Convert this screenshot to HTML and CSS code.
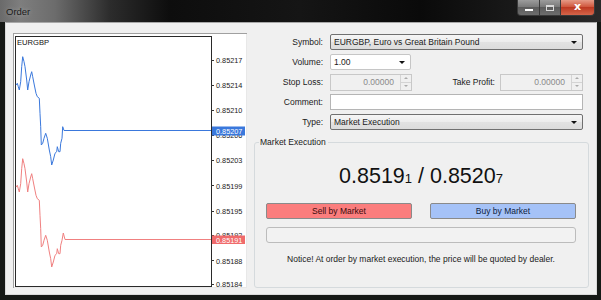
FILE: index.html
```html
<!DOCTYPE html>
<html lang="en">
  <head>
    <meta charset="UTF-8" />
    <title>Order</title>
    <link rel="stylesheet" href="styles.css">
  </head>
  <body>
    <div class="window">
      <div class="titlebar">
        <span class="title">Order</span>
        <div class="caption-buttons">
          <span class="cap-btn cap-min"><i></i></span>
          <span class="cap-btn cap-max"><i></i></span>
          <span class="cap-btn cap-close">x</span>
        </div>
      </div>

      <div class="client">
        <div class="chart-panel">
          <svg class="chart" width="234" height="255" viewBox="0 0 234 255">
            <rect class="plot" x="2.5" y="3.5" width="196" height="250" />
            <text class="sym" x="4" y="12">EURGBP</text>

            <g class="ticks">
              <line x1="198" y1="27.5" x2="201" y2="27.5" />
              <line x1="198" y1="52.5" x2="201" y2="52.5" />
              <line x1="198" y1="77.5" x2="201" y2="77.5" />
              <line x1="198" y1="102.5" x2="201" y2="102.5" />
              <line x1="198" y1="127.5" x2="201" y2="127.5" />
              <line x1="198" y1="152.5" x2="201" y2="152.5" />
              <line x1="198" y1="178.5" x2="201" y2="178.5" />
              <line x1="198" y1="202.5" x2="201" y2="202.5" />
              <line x1="198" y1="227.5" x2="201" y2="227.5" />
              <line x1="198" y1="251.5" x2="201" y2="251.5" />
            </g>
            <g class="axis">
              <text x="203" y="30">0.85217</text>
              <text x="203" y="55">0.85214</text>
              <text x="203" y="80">0.85210</text>
              <text x="203" y="105.2">0.85206</text>
              <text x="203" y="130">0.85203</text>
              <text x="203" y="155.5">0.85199</text>
              <text x="203" y="181">0.85195</text>
              <text x="203" y="205">0.85192</text>
              <text x="203" y="230.5">0.85188</text>
              <text x="203" y="254">0.85184</text>
            </g>

            <path class="ask" d="M3 52 L4.3 50.3 L5.3 53.7 L6.3 57 L7.7 48.7 L8.7 33.7 L9.7 23.7 L11 28.7 L12 33.7 L13.7 47 L14.7 57 L16 48.7 L17.7 42 L18.7 38.7 L19.7 43.7 L21.3 52 L23 60.3 L24.3 63.7 L26.3 65.3 L27 80.3 L27.7 93.7 L28.3 112 L29.7 110.3 L31 105.3 L32.7 100.3 L34.3 105.3 L36.3 117 L37.7 123.7 L38.7 132 L40.3 127 L42 120.3 L43.7 118.7 L44.3 113.7 L45.7 118.7 L47 118.7 L47.7 110.3 L49 105.3 L49.7 93.7 L51 97.5 L198 97.5" />
            <path class="bid" d="M3 154 L4.3 152.3 L5.3 155.7 L6.3 159 L7.7 150.7 L8.7 135.7 L9.7 125.7 L11 130.7 L12 135.7 L13.7 149 L14.7 159 L16 150.7 L17.7 144 L18.7 140.7 L19.7 145.7 L21.3 154 L23 162.3 L24.3 165.7 L26.3 167.3 L27 182.3 L27.7 195.7 L28.3 214 L29.7 212.3 L31 207.3 L32.7 202.3 L34.3 207.3 L36.3 219 L37.7 225.7 L38.7 234 L40.3 229 L42 222.3 L43.7 220.7 L44.3 215.7 L45.7 220.7 L47 220.7 L47.7 212.3 L49 207.3 L50.3 200 L52 206.5 L198 206.5" />

            <rect class="ask-tag" x="199" y="93.5" width="33" height="9" />
            <text class="tag-text" x="203" y="101">0.85207</text>
            <rect class="bid-tag" x="199" y="202.5" width="33" height="8.5" />
            <text class="tag-text" x="203" y="209.7">0.85191</text>
          </svg>
        </div>

        <div class="order-form">
          <div class="row">
            <span class="lbl">Symbol:</span>
            <div class="combo wide">EURGBP, Euro vs Great Britain Pound<b class="arrow"></b></div>
          </div>
          <div class="row">
            <span class="lbl">Volume:</span>
            <div class="edit-combo">1.00<b class="arrow"></b></div>
          </div>
          <div class="row">
            <span class="lbl">Stop Loss:</span>
            <div class="spin">
              <span class="spin-value">0.00000</span>
              <span class="spin-btns"><i class="up"></i><i class="down"></i></span>
            </div>
            <span class="lbl lbl-tp">Take Profit:</span>
            <div class="spin spin-tp">
              <span class="spin-value">0.00000</span>
              <span class="spin-btns"><i class="up"></i><i class="down"></i></span>
            </div>
          </div>
          <div class="row">
            <span class="lbl">Comment:</span>
            <div class="edit wide"></div>
          </div>
          <div class="row">
            <span class="lbl">Type:</span>
            <div class="combo wide">Market Execution<b class="arrow"></b></div>
          </div>

          <fieldset class="group">
            <legend>Market Execution</legend>
            <div class="price">0.8519<small>1</small> / 0.8520<small>7</small></div>
            <div class="trade-buttons">
              <div class="btn btn-sell">Sell by Market</div>
              <div class="btn btn-buy">Buy by Market</div>
            </div>
            <div class="progress"></div>
            <p class="notice">Notice! At order by market execution, the price will be quoted by dealer.</p>
          </fieldset>
        </div>
      </div>
    </div>
  </body>
</html>
```

FILE: styles.css
```css
* {
  margin: 0;
  padding: 0;
  box-sizing: border-box;
}

body {
  font-family: "Liberation Sans", Arial, sans-serif;
  background: #141814;
  width: 601px;
  height: 300px;
  overflow: hidden;
}

.window {
  width: 601px;
  height: 300px;
  background: #161916;
}

/* title bar */
.titlebar {
  height: 22px;
  display: flex;
  align-items: flex-start;
  background: linear-gradient(to right, #6a6a6a 0, #7e7e7e 20px, #6c6c6c 55px, #2c2c2c 110px, #0d0d0d 170px, #151515 300px, #0a0a0a 420px, #1a1a1a 520px, #2a2a2a 601px);
}

.title {
  font-size: 9.5px;
  color: #1a1a1a;
  margin: 6px 0 0 6px;
  text-shadow: 0 0 4px rgba(255, 255, 255, 0.35);
}

.caption-buttons {
  margin-left: auto;
  margin-right: 6px;
  display: flex;
  height: 16px;
}

.cap-btn {
  display: flex;
  align-items: center;
  justify-content: center;
  border: 1px solid #3a3a3a;
  border-top: none;
  color: #fff;
}

.cap-min {
  width: 23px;
  border-radius: 0 0 0 4px;
  background: linear-gradient(#9c9c9c, #7a7a7a 45%, #5c5c5c 50%, #6e6e6e);
}

.cap-min i {
  width: 8px;
  height: 2px;
  background: #fff;
  margin-top: 5px;
}

.cap-max {
  width: 21px;
  border-left: none;
  background: linear-gradient(#9c9c9c, #7a7a7a 45%, #5c5c5c 50%, #6e6e6e);
}

.cap-max i {
  width: 8px;
  height: 6px;
  border: 1px solid #d8d8d8;
  border-top-width: 2px;
}

.cap-close {
  width: 34px;
  border-left: none;
  border-radius: 0 0 4px 0;
  background: linear-gradient(#e59a86, #d0583e 45%, #bd3a22 50%, #d4654a);
  font-family: "DejaVu Sans", sans-serif;
  font-weight: bold;
  font-size: 11px;
  line-height: 1;
  padding-bottom: 2px;
}

/* client area */
.client {
  margin: 0 4px 0 5px;
  height: 273px;
  background: #f0f0f0;
  border: 1px solid #dadada;
  border-top-color: #a8a8a8;
  display: flex;
  align-items: flex-start;
}

.chart-panel {
  margin: 10px 0 0 7px;
  width: 234px;
  height: 255px;
  background: #fff;
  box-shadow: inset 1px 1px 0 #a0a0a0, inset -1px -1px 0 #e8e8e8;
}

.chart {
  display: block;
}

.chart .plot {
  fill: #fff;
  stroke: #2a2a2a;
  stroke-width: 1;
}

.chart .sym {
  font-size: 7.6px;
  fill: #111;
}

.chart .ticks line {
  stroke: #333;
  stroke-width: 1;
}

.chart .axis text {
  font-size: 7.3px;
  fill: #222;
}

.chart .ask,
.chart .bid {
  fill: none;
  stroke-width: 1;
}

.chart .ask {
  stroke: #3a78dc;
}

.chart .bid {
  stroke: #f08080;
}

.chart .ask-tag {
  fill: #3a78dc;
}

.chart .bid-tag {
  fill: #f06b6b;
}

.chart .tag-text {
  font-size: 7.3px;
  fill: #fff;
}

/* order form */
.order-form {
  margin-left: 7px;
  width: 335px;
  padding-top: 11px;
  font-size: 8.5px;
  color: #1a1a1a;
}

.row {
  display: flex;
  align-items: center;
  height: 16px;
  margin-bottom: 4px;
}

.lbl {
  width: 69px;
  text-align: right;
  margin-right: 7px;
}

.lbl-tp {
  width: 83px;
  margin-right: 5px;
}

.wide {
  width: 253px;
}

.combo,
.edit-combo,
.edit {
  position: relative;
  height: 16px;
  line-height: 14px;
  padding-left: 3px;
  background: #fff;
  border: 1px solid #8e8f8f;
  border-radius: 2px;
}

.combo {
  background: linear-gradient(#f6f6f6, #ececec 50%, #e2e2e2 50%, #dcdcdc);
  border-color: #707070;
}

.edit-combo {
  width: 81px;
  border-color: #c6c6c6;
}

.edit {
  border-color: #b5b5b5;
  border-radius: 0;
}

.arrow {
  position: absolute;
  right: 5px;
  top: 6px;
  width: 0;
  height: 0;
  border-left: 3px solid transparent;
  border-right: 3px solid transparent;
  border-top: 3px solid #111;
}

.spin {
  width: 82px;
  height: 17px;
  display: flex;
  border: 1px solid #c8c8c8;
  background: #f0f0f0;
  color: #8a8a8a;
}

.spin-tp {
  width: 83px;
}

.spin-value {
  flex: 1;
  text-align: right;
  line-height: 15px;
  padding-right: 6px;
}

.spin-btns {
  width: 11px;
  display: flex;
  flex-direction: column;
  border-left: 1px solid #d4d4d4;
}

.spin-btns i {
  flex: 1;
  display: flex;
  align-items: center;
  justify-content: center;
}

.spin-btns .up {
  border-bottom: 1px solid #d4d4d4;
}

.spin-btns .up::after,
.spin-btns .down::after {
  content: "";
  border-left: 2px solid transparent;
  border-right: 2px solid transparent;
}

.spin-btns .up::after {
  border-bottom: 2px solid #aaa;
}

.spin-btns .down::after {
  border-top: 2px solid #aaa;
}

/* market execution group */
.group {
  margin-top: 7px;
  width: 335px;
  height: 151px;
  border: 1px solid #d5dadd;
  border-radius: 3px;
  padding: 0 12px 0 11px;
}

.group legend {
  margin-left: -7px;
  padding: 0 2px 0 1px;
  line-height: 10px;
}

.price {
  margin-top: 16px;
  text-align: center;
  font-size: 21.5px;
  line-height: 26px;
  color: #111;
}

.price small {
  font-size: 13px;
}

.trade-buttons {
  margin-top: 11px;
  display: flex;
  justify-content: space-between;
}

.btn {
  width: 146px;
  height: 16px;
  line-height: 14px;
  text-align: center;
  border: 1px solid #8a8a8a;
  border-radius: 2px;
}

.btn-sell {
  background: #fb7d7d;
  color: #3a0c0c;
}

.btn-buy {
  background: #a5c2f7;
  color: #0d1d3d;
}

.progress {
  margin-top: 8px;
  height: 16px;
  border: 1px solid #bcbcbc;
  border-radius: 3px;
  background: #f2f2f2;
}

.notice {
  margin-top: 11px;
  text-align: center;
  line-height: 10px;
}
```
